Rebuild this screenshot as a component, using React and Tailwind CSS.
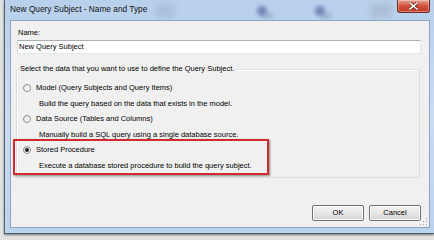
import React from 'react';

function Radio({ checked }) {
    return (
        <span className="w-[8px] h-[8px] rounded-full border border-[#8f8f8f] bg-gradient-to-br from-[#e6e6e6] to-[#ffffff] flex items-center justify-center shrink-0">
            {checked && <span className="w-[4px] h-[4px] rounded-full bg-[#1a1a1a]" />}
        </span>
    );
}

function Option({ label, desc, checked }) {
    return (
        <>
            <div className="h-[15.5px] flex items-center gap-[5px] pl-[6px]">
                <Radio checked={checked} />
                <span>{label}</span>
            </div>
            <div className="h-[15.5px] flex items-center pl-[22px]">{desc}</div>
        </>
    );
}

function Button({ children }) {
    return (
        <button className="w-[52px] h-[16px] rounded-[2px] border border-[#707070] bg-gradient-to-b from-[#f4f4f4] via-[#e6e6e6] to-[#d4d4d4] shadow-[inset_0_0_0_1px_#fcfcfc] text-[7.5px] text-black flex items-center justify-center">
            {children}
        </button>
    );
}

export default function App() {
    return (
        <div className="w-[434px] h-[240px] bg-[#e2e2e2] overflow-hidden flex flex-col font-['Liberation_Sans',Arial,sans-serif] text-black">
            <div className="ml-[4px] w-[430px] h-[234px] flex flex-col border-l border-b border-[#55606e] bg-gradient-to-b from-[#b8d0ec] via-[#c9dcf2] to-[#bcd3ee] relative shadow-[0_1px_2px_rgba(0,0,0,0.5)]">
                {/* title bar */}
                <div className="h-[20px] flex items-center pl-[5px] pb-[2px] relative overflow-hidden">
                    <div className="absolute left-[150px] top-[4px] w-[20px] h-[14px] bg-[#9fb6cf] blur-[3px] opacity-60" />
                    <div className="absolute left-[252px] top-[6px] w-[10px] h-[10px] rounded-full bg-[#5a6fa8] blur-[2px] opacity-80" />
                    <div className="absolute left-[258px] top-[14px] w-[10px] h-[4px] bg-[#7e93b8] blur-[2px] opacity-70" />
                    <div className="absolute left-[310px] top-[6px] w-[10px] h-[10px] rounded-full bg-[#5a6fa8] blur-[2px] opacity-80" />
                    <div className="absolute left-[316px] top-[14px] w-[10px] h-[4px] bg-[#7e93b8] blur-[2px] opacity-70" />
                    <div className="absolute left-[365px] top-[4px] w-[22px] h-[14px] bg-[#a6b8cc] blur-[3px] opacity-70" />
                    <span className="relative text-[8.3px] text-[#111]">New Query Subject - Name and Type</span>
                    <div className="absolute right-[4px] top-0 w-[33px] h-[13px] rounded-b-[3px] border border-t-0 border-[#6b2a22] bg-gradient-to-b from-[#e9a18f] via-[#cf4f38] to-[#c23a26] flex items-center justify-center shadow-[inset_0_0_0_1px_rgba(255,255,255,0.35)]">
                        <svg width="9" height="8" viewBox="0 0 9 8">
                            <path d="M1 1 L8 7 M8 1 L1 7" stroke="#5a1d14" strokeWidth="3" strokeLinecap="square" />
                            <path d="M1 1 L8 7 M8 1 L1 7" stroke="#ffffff" strokeWidth="1.6" strokeLinecap="square" />
                        </svg>
                    </div>
                </div>

                {/* body */}
                <div className="flex-1 flex pl-[5px] pr-[4px] pb-[5px]">
                    <div className="flex-1 bg-[#f0f0f0] border border-[#8fa3bd] flex flex-col pl-[6px] pr-[8px] text-[7.5px] relative">
                        <div className="pt-[7px] h-[17px] ml-[1px] flex items-center leading-none">Name:</div>
                        <div className="mt-[2px] h-[14px] w-[404px] bg-white border border-[#abadb3] border-l-[#dbdfe6] border-r-[#e3e9ef] border-b-[#e3e9ef] flex items-center pl-[1px]">
                            New Query Subject
                        </div>

                        <div className="mt-[15px] ml-[-1px] w-[404px] h-[109px] border border-[#d5dfe5] rounded-[2px] shadow-[inset_1px_1px_0_#ffffff] relative flex flex-col pt-[10px]">
                            <span className="absolute left-[2px] top-[-6px] px-[1px] bg-[#f0f0f0] leading-[10px]">
                                Select the data that you want to use to define the Query Subject.
                            </span>
                            <Option label="Model (Query Subjects and Query Items)" desc="Build the query based on the data that exists in the model." />
                            <Option label="Data Source (Tables and Columns)" desc="Manually build a SQL query using a single database source." />
                            <Option label="Stored Procedure" desc="Execute a database stored procedure to build the query subject." checked />
                            <div className="absolute left-[-4px] top-[69px] w-[256px] h-[36px] border-2 border-[#d12b2f] shadow-[1px_1px_2px_rgba(0,0,0,0.45)]" />
                        </div>

                        <div className="mt-[27px] flex justify-end gap-[5px]">
                            <Button>OK</Button>
                            <Button>Cancel</Button>
                        </div>

                        <svg className="absolute right-[1px] bottom-[1px]" width="9" height="9" viewBox="0 0 9 9">
                            {[[7, 1], [7, 4], [4, 4], [7, 7], [4, 7], [1, 7]].map(([x, y], i) => (
                                <g key={i}>
                                    <rect x={x + 0.5} y={y + 0.5} width="1" height="1" fill="#ffffff" />
                                    <rect x={x} y={y} width="1" height="1" fill="#a0a0a0" />
                                </g>
                            ))}
                        </svg>
                    </div>
                </div>
            </div>
        </div>
    );
}
